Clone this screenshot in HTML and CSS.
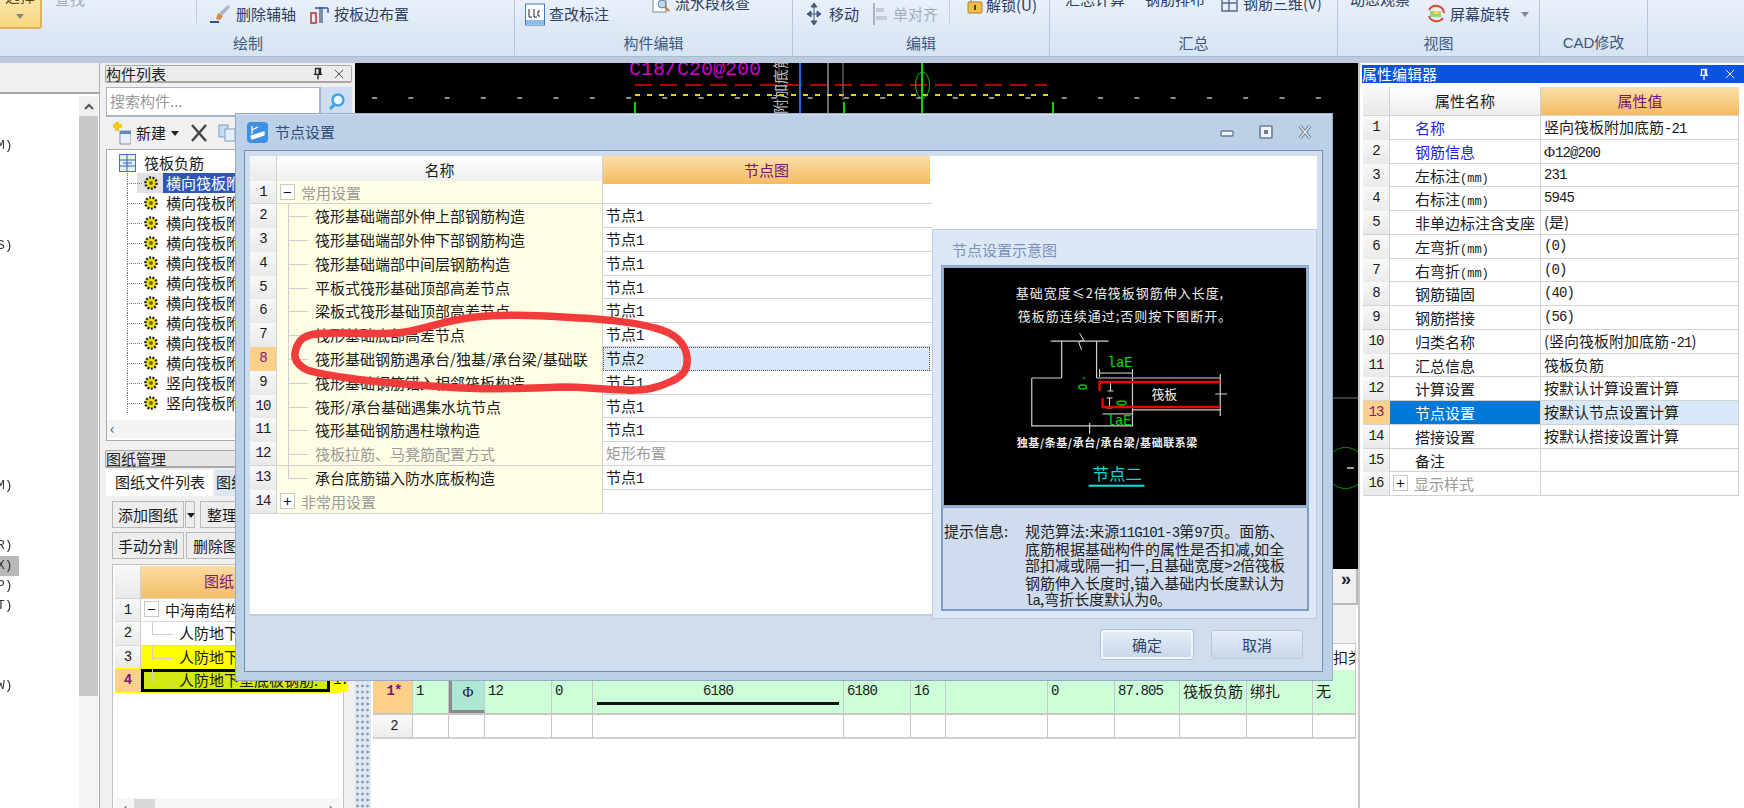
FILE: index.html
```html
<!DOCTYPE html>
<html lang="zh">
<head>
<meta charset="utf-8">
<title>节点设置</title>
<link rel="stylesheet" href="styles.css">
</head>
<body>
<svg class="defs" width="0" height="0" aria-hidden="true">
  <symbol id="gear" viewBox="0 0 16 16"><circle cx="8" cy="8" r="5.6" fill="#eee000" stroke="#222" stroke-width="2.4" stroke-dasharray="2 1.4"/><circle cx="8" cy="8" r="2" fill="#6b6200"/></symbol>
  <symbol id="pin" viewBox="0 0 12 14"><path d="M3 1h6v7H3zM1 8h10M6 8v6M7.5 1v7" fill="none" stroke="currentColor" stroke-width="1.6"/></symbol>
  <symbol id="cross" viewBox="0 0 12 12"><path d="M1 1l10 10M11 1L1 11" fill="none" stroke="currentColor" stroke-width="1.2"/></symbol>
</svg>
<div class="app">
  <header class="ribbon">
    <section class="sec s1">
      <div class="sec-body">
        <div class="bigbtn"><span class="bigbtn-t">选择</span><span class="caret"></span></div>
        <span class="rt dim ym ml13">查找</span>
        <span class="vsep sep1"></span>
        <span class="ri ml11">
          <svg width="24" height="20" viewBox="0 0 24 20"><path d="M2 18h9" stroke="#35507a" stroke-width="2"/><path d="M8 15l2-6 5 3-3 4z" fill="#d9893a"/><path d="M11 9l9-8 2 2-8 9z" fill="#a8b6c8"/></svg>
          <span class="rt">删除辅轴</span></span>
        <span class="ri ml14">
          <svg width="20" height="20" viewBox="0 0 20 20"><rect x="1" y="9" width="5" height="10" fill="none" stroke="#c33" stroke-width="1.6"/><path d="M11 3v16" stroke="#7d8ea5" stroke-width="4"/><path d="M5 4h13M18 4v5" stroke="#3a4fa0" stroke-width="1.4" fill="none"/></svg>
          <span class="rt">按板边布置</span></span>
      </div>
      <div class="sec-label lab1">绘制</div>
    </section>
    <section class="sec s2">
      <div class="sec-body">
        <span class="ri ml10">
          <svg width="20" height="23" viewBox="0 0 20 23"><rect x=".5" y="1" width="19" height="21" fill="#fff" stroke="#3c7cc4"/><rect x="1" y="17" width="18" height="4" fill="#8fbbe8"/><path d="M4 6v8M4 14h3M9 6v8h3M15 8h-2v5h2" stroke="#223" fill="none"/></svg>
          <span class="rt">查改标注</span></span>
        <span class="ri y3 ml43">
          <svg width="19" height="20" viewBox="0 0 19 20"><rect x="1" y="1" width="13" height="18" fill="#fff" stroke="#7488a4"/><circle cx="10" cy="11" r="4" fill="#bcd8f0" stroke="#66809e"/><path d="M13 14l4 4" stroke="#c77a2c" stroke-width="2"/></svg>
          <span class="rt">流水段核查</span></span>
      </div>
      <div class="sec-label">构件编辑</div>
    </section>
    <section class="sec s3">
      <div class="sec-body">
        <span class="ri ml13 gap7">
          <svg width="16" height="24" viewBox="0 0 16 24"><path d="M8 1v22M1 12h14M8 1L5 5h6zM8 23l-3-4h6zM1 12l4-3v6zM15 12l-4-3v6z" fill="#44597a" stroke="#44597a"/></svg>
          <span class="rt">移动</span></span>
        <span class="ri ml13 gap6">
          <svg width="15" height="26" viewBox="0 0 15 26"><path d="M2 2v22" stroke="#aab3bf" stroke-width="2"/><rect x="4" y="7" width="8" height="4" fill="#c4ccd6"/><rect x="4" y="15" width="11" height="4" fill="#c4ccd6"/></svg>
          <span class="rt dim">单对齐</span></span>
        <span class="vsep sep3"></span>
        <span class="ri y5 ml17 gap3">
          <svg width="16" height="18" viewBox="0 0 16 18"><path d="M4 7V3a3 3 0 0 1 6 0" fill="none" stroke="#999" stroke-width="1.6"/><rect x="1" y="6" width="14" height="11" rx="1" fill="#efbe4a" stroke="#a9812a"/><path d="M8 9v5" stroke="#5b3c00" stroke-width="2"/></svg>
          <span class="rt">解锁(U)</span></span>
      </div>
      <div class="sec-label">编辑</div>
    </section>
    <section class="sec s4">
      <div class="sec-body">
        <span class="rt ym ml15">汇总计算</span>
        <span class="rt ym ml20">钢筋排布</span>
        <span class="ri y3 ml15">
          <svg width="19" height="20" viewBox="0 0 19 20"><path d="M2 2h15v16H2zM2 10h15M9 2v16" fill="none" stroke="#52688a" stroke-width="1.4"/></svg>
          <span class="rt">钢筋三维(V)</span></span>
      </div>
      <div class="sec-label">汇总</div>
    </section>
    <section class="sec s5">
      <div class="sec-body">
        <span class="rt ym ml12">动态观察</span>
        <span class="ri ml16">
          <svg width="20" height="20" viewBox="0 0 20 20"><path d="M3 6a8 8 0 0 1 15 3M17 14A8 8 0 0 1 3 12" fill="none" stroke="#d8482c" stroke-width="2"/><rect x="4" y="7" width="11" height="6" fill="#9fd07a"/><rect x="8" y="7" width="5" height="3" fill="#f4d654"/></svg>
          <span class="rt">屏幕旋转</span></span>
        <span class="caret caret-r"></span>
      </div>
      <div class="sec-label">视图</div>
    </section>
    <section class="sec s6"><div class="sec-body"></div><div class="sec-label lat">CAD修改</div></section>
    <section class="sec s7"></section>
  </header>

  <main class="main">
    <aside class="col1">
      <div class="col1-inner">
        <div class="col1-top"></div>
        <div class="col1-body">
          <div class="menu">
            <div class="lrow"></div><div class="lrow"></div><div class="lrow">M)</div><div class="lrow"></div><div class="lrow"></div><div class="lrow"></div><div class="lrow"></div><div class="lrow">S)</div><div class="lrow"></div><div class="lrow"></div><div class="lrow"></div><div class="lrow"></div><div class="lrow"></div><div class="lrow"></div><div class="lrow"></div><div class="lrow"></div><div class="lrow"></div><div class="lrow"></div><div class="lrow"></div><div class="lrow">M)</div><div class="lrow"></div><div class="lrow"></div><div class="lrow">R)</div><div class="lrow on">X)</div><div class="lrow">P)</div><div class="lrow">T)</div><div class="lrow"></div><div class="lrow"></div><div class="lrow"></div><div class="lrow">W)</div>
          </div>
          <div class="vscroll"><div class="vs-up"><svg width="10" height="7" viewBox="0 0 10 7"><path d="M1 6l4-4 4 4" fill="none" stroke="#555" stroke-width="2"/></svg></div><div class="vs-thumb"></div></div>
        </div>
      </div>
    </aside>

    <aside class="col2">
      <div class="ptitle"><span class="ptitle-t">构件列表</span><svg class="pin" width="10" height="13"><use href="#pin"/></svg><svg class="x" width="10" height="10"><use href="#cross"/></svg></div>
      <div class="search"><div class="search-in">搜索构件...</div><div class="search-btn"><svg width="18" height="20" viewBox="0 0 18 20"><circle cx="10" cy="8" r="5.5" fill="#e9f6ff" stroke="#3fa2e6" stroke-width="2.4"/><path d="M6 13l-4 4" stroke="#3fa2e6" stroke-width="3"/></svg></div></div>
      <div class="tools">
        <svg width="20" height="24" viewBox="0 0 20 24"><path d="M6 1v9M2 5h9" stroke="#f2c91d" stroke-width="4"/><rect x="9" y="10" width="11" height="13" fill="#e8eef6" stroke="#7f93ad"/><rect x="9" y="10" width="11" height="3" fill="#5f86bd"/></svg>
        <span class="tool-t">新建</span><span class="caret dark"></span>
        <svg class="tool-x" width="16" height="18" viewBox="0 0 16 18"><path d="M1 1l14 16M15 1L1 17" stroke="#444" stroke-width="2.4"/></svg>
        <svg class="tool-c" width="18" height="18" viewBox="0 0 18 18"><rect x="1" y="1" width="9" height="12" fill="#c8dcf2" stroke="#7d9cc4"/><rect x="7" y="5" width="10" height="12" fill="#e7f0fa" stroke="#7d9cc4"/></svg>
      </div>
      <div class="treebox">
        <div class="troot"><svg width="17" height="18" viewBox="0 0 17 18"><rect x=".5" y=".5" width="16" height="17" fill="#e6f0fb" stroke="#3f78c0"/><path d="M1 6h15M1 12h15M8 1v16M4 9h9" stroke="#2c64b0"/></svg><span>筏板负筋</span></div>
        <div class="titem sel"><svg width="16" height="16"><use href="#gear"/></svg><span>横向筏板附加底筋-1</span></div>
        <div class="titem"><svg width="16" height="16"><use href="#gear"/></svg><span>横向筏板附加底筋-2</span></div>
        <div class="titem"><svg width="16" height="16"><use href="#gear"/></svg><span>横向筏板附加底筋-3</span></div>
        <div class="titem"><svg width="16" height="16"><use href="#gear"/></svg><span>横向筏板附加底筋-4</span></div>
        <div class="titem"><svg width="16" height="16"><use href="#gear"/></svg><span>横向筏板附加底筋-5</span></div>
        <div class="titem"><svg width="16" height="16"><use href="#gear"/></svg><span>横向筏板附加底筋-6</span></div>
        <div class="titem"><svg width="16" height="16"><use href="#gear"/></svg><span>横向筏板附加底筋-7</span></div>
        <div class="titem"><svg width="16" height="16"><use href="#gear"/></svg><span>横向筏板附加底筋-8</span></div>
        <div class="titem"><svg width="16" height="16"><use href="#gear"/></svg><span>横向筏板附加底筋-9</span></div>
        <div class="titem"><svg width="16" height="16"><use href="#gear"/></svg><span>横向筏板附加底筋-10</span></div>
        <div class="titem"><svg width="16" height="16"><use href="#gear"/></svg><span>竖向筏板附加底筋-1</span></div>
        <div class="titem"><svg width="16" height="16"><use href="#gear"/></svg><span>竖向筏板附加底筋-2</span></div>
        <div class="tscroll"><span>‹</span></div>
      </div>
      <div class="ptitle ptitle2"><span class="ptitle-t">图纸管理</span></div>
      <div class="tabs"><div class="tab on">图纸文件列表</div><div class="tab">图纸楼层构件</div></div>
      <div class="btnrow"><div class="pbtn w72">添加图纸</div><div class="pbtn w10"><span class="caret dark"></span></div><div class="pbtn ml4">整理图纸</div></div>
      <div class="btnrow r2"><div class="pbtn w72">手动分割</div><div class="pbtn">删除图纸</div></div>
      <div class="dwg">
        <div class="dwg-h"><div class="dn"></div><div class="dh">图纸名称</div></div>
        <div class="dr"><div class="dn n">1</div><div class="dc"><span class="pm">−</span>中海南结构图纸</div></div>
        <div class="dr"><div class="dn n">2</div><div class="dc ch">人防地下室底板钢筋</div></div>
        <div class="dr yel"><div class="dn n">3</div><div class="dc ch">人防地下室顶板钢筋</div></div>
        <div class="dr yel act"><div class="dn n cur">4</div><div class="dc ch cur"><span>人防地下室底板钢筋.</span></div><div class="dx n">1.</div></div>
        <div class="dscroll"><span>‹</span><i></i><span class="rgt">›</span></div>
      </div>
    </aside>

    <div class="col3">
      <svg class="cad" width="1003" height="506" viewBox="355 63 1003 506">
        <text x="629" y="75" class="cad-m">C18/C20@200</text>
        <path d="M635 85H1047" stroke="#b30000" stroke-width="2" stroke-dasharray="17 8"/>
        <path d="M635 95H1052" stroke="#d8d800" stroke-width="2" stroke-dasharray="5 7"/>
        <path d="M372 98H1330" stroke="#8c8c8c" stroke-width="2" stroke-dasharray="5 31.3"/>
        <path d="M635 102V569M844 102V569M1053 102V569M922 63V569" stroke="#00d800" stroke-width="2"/>
        <ellipse cx="922.5" cy="85" rx="7" ry="13" fill="none" stroke="#00c000"/>
        <path d="M800 63V569" stroke="#1c6ed8" stroke-width="2"/>
        <path d="M828 63V569" stroke="#ddd"/><path d="M843 63V100" stroke="#888"/>
        <path d="M779 63V84" stroke="#777"/>
        <text transform="translate(786 114) rotate(-90)" class="cad-w">附加底筋</text>
        <path d="M1333 398H1358" stroke="#777"/>
        <path d="M1347 468H1354" stroke="#999" stroke-width="2"/>
        <path d="M1358 452a18 16 0 0 0-25 0M1333 484a18 16 0 0 0 25 0" fill="none" stroke="#009000"/>
      </svg>
      <div class="bottom">
        <div class="more"><span>»</span></div>
        <div class="band"></div>
        <div class="gridwrap">
          <div class="grip"></div>
          <div class="bgrid">
            <div class="brow bhead"><div></div><div></div><div></div><div></div><div></div><div></div><div></div><div></div><div></div><div></div><div></div><div></div><div></div><div class="hl">扣类</div></div>
            <div class="brow green">
              <div class="bnum n">1*</div><div class="n">1</div><div class="bsel"><span class="lat-serif">Φ</span></div><div class="n">12</div><div class="n">0</div><div class="bfig n"><span>6180</span><i></i></div><div class="n">6180</div><div class="n">16</div><div></div><div class="n">0</div><div class="n">87.805</div><div>筏板负筋</div><div>绑扎</div><div>无</div>
            </div>
            <div class="brow plain"><div class="bnum2 n">2</div><div></div><div></div><div></div><div></div><div></div><div></div><div></div><div></div><div></div><div></div><div></div><div></div><div></div></div>
          </div>
        </div>
      </div>
    </div>

    <aside class="col4">
      <div class="ptitle blue"><span class="ptitle-t">属性编辑器</span><svg class="pin" width="10" height="13"><use href="#pin"/></svg><svg class="x" width="10" height="10"><use href="#cross"/></svg></div>
      <div class="props">
        <div class="prow phead"><div class="cn"></div><div class="cname">属性名称</div><div class="cval">属性值</div></div>
        <div class="prow"><div class="cn n">1</div><div class="pn bl">名称</div><div class="pv">竖向筏板附加底筋<span class="n">-21</span></div></div>
        <div class="prow"><div class="cn n">2</div><div class="pn bl">钢筋信息</div><div class="pv"><span class="lat-serif">Φ</span><span class="n">12@200</span></div></div>
        <div class="prow"><div class="cn n">3</div><div class="pn">左标注<span class="mm">(mm)</span></div><div class="pv n">231</div></div>
        <div class="prow"><div class="cn n">4</div><div class="pn">右标注<span class="mm">(mm)</span></div><div class="pv n">5945</div></div>
        <div class="prow"><div class="cn n">5</div><div class="pn">非单边标注含支座</div><div class="pv">(是)</div></div>
        <div class="prow"><div class="cn n">6</div><div class="pn">左弯折<span class="mm">(mm)</span></div><div class="pv n">(0)</div></div>
        <div class="prow"><div class="cn n">7</div><div class="pn">右弯折<span class="mm">(mm)</span></div><div class="pv n">(0)</div></div>
        <div class="prow"><div class="cn n">8</div><div class="pn">钢筋锚固</div><div class="pv n">(40)</div></div>
        <div class="prow"><div class="cn n">9</div><div class="pn">钢筋搭接</div><div class="pv n">(56)</div></div>
        <div class="prow"><div class="cn n">10</div><div class="pn">归类名称</div><div class="pv">(竖向筏板附加底筋<span class="n">-21</span>)</div></div>
        <div class="prow"><div class="cn n">11</div><div class="pn">汇总信息</div><div class="pv">筏板负筋</div></div>
        <div class="prow"><div class="cn n">12</div><div class="pn">计算设置</div><div class="pv">按默认计算设置计算</div></div>
        <div class="prow sel"><div class="cn n">13</div><div class="pn">节点设置</div><div class="pv">按默认节点设置计算</div></div>
        <div class="prow"><div class="cn n">14</div><div class="pn">搭接设置</div><div class="pv">按默认搭接设置计算</div></div>
        <div class="prow"><div class="cn n">15</div><div class="pn">备注</div><div class="pv"></div></div>
        <div class="prow"><div class="cn n">16</div><div class="pn gr"><span class="pm pm-p">+</span>显示样式</div><div class="pv"></div></div>
      </div>
    </aside>
  </main>

  <div class="dialog">
    <div class="d-title">
      <svg width="21" height="21" viewBox="0 0 21 21"><rect width="21" height="21" rx="4" fill="#3f8fe0"/><path d="M5 4v8M5 8l6-3M4 14l13-4v3L5 17z" stroke="#fff" fill="#fff" stroke-width="1.3"/></svg>
      <span class="d-title-t">节点设置</span>
      <span class="d-ctrls">
        <svg width="16" height="12" viewBox="0 0 16 12"><rect x="2" y="5" width="12" height="5" rx="1" fill="#eef3f9" stroke="#6c7b8f" stroke-width="1.4"/></svg>
        <svg width="16" height="16" viewBox="0 0 16 16"><rect x="2" y="2" width="12" height="12" rx="1" fill="#eef3f9" stroke="#6c7b8f" stroke-width="1.6"/><rect x="6" y="6" width="4" height="4" fill="#6c7b8f"/></svg>
        <svg width="16" height="16" viewBox="0 0 16 16"><path d="M3 2l10 12M13 2L3 14" stroke="#6c7b8f" stroke-width="3.4"/><path d="M3 2l10 12M13 2L3 14" stroke="#eef3f9" stroke-width="1.2"/></svg>
      </span>
    </div>
    <div class="d-frame">
      <div class="d-main">
        <div class="d-table">
          <div class="trow thead"><div class="cn"></div><div class="cname">名称</div><div class="cval">节点图</div></div>
          <div class="trow"><div class="cn n">1</div><div class="tn gr"><span class="pm">−</span>常用设置</div><div class="tv"></div></div>
          <div class="trow"><div class="cn n">2</div><div class="tn lf">筏形基础端部外伸上部钢筋构造</div><div class="tv">节点<span class="n">1</span></div></div>
          <div class="trow"><div class="cn n">3</div><div class="tn lf">筏形基础端部外伸下部钢筋构造</div><div class="tv">节点<span class="n">1</span></div></div>
          <div class="trow"><div class="cn n">4</div><div class="tn lf">筏形基础端部中间层钢筋构造</div><div class="tv">节点<span class="n">1</span></div></div>
          <div class="trow"><div class="cn n">5</div><div class="tn lf">平板式筏形基础顶部高差节点</div><div class="tv">节点<span class="n">1</span></div></div>
          <div class="trow"><div class="cn n">6</div><div class="tn lf">梁板式筏形基础顶部高差节点</div><div class="tv">节点<span class="n">1</span></div></div>
          <div class="trow"><div class="cn n">7</div><div class="tn lf">筏形基础底部高差节点</div><div class="tv">节点<span class="n">1</span></div></div>
          <div class="trow cur"><div class="cn n">8</div><div class="tn lf">筏形基础钢筋遇承台/独基/承台梁/基础联</div><div class="tv">节点<span class="n">2</span></div></div>
          <div class="trow"><div class="cn n">9</div><div class="tn lf">筏形基础钢筋锚入相邻筏板构造</div><div class="tv">节点<span class="n">1</span></div></div>
          <div class="trow"><div class="cn n">10</div><div class="tn lf">筏形/承台基础遇集水坑节点</div><div class="tv">节点<span class="n">1</span></div></div>
          <div class="trow"><div class="cn n">11</div><div class="tn lf">筏形基础钢筋遇柱墩构造</div><div class="tv">节点<span class="n">1</span></div></div>
          <div class="trow"><div class="cn n">12</div><div class="tn lf gr">筏板拉筋、马凳筋配置方式</div><div class="tv gr">矩形布置</div></div>
          <div class="trow"><div class="cn n">13</div><div class="tn lf last">承台底筋锚入防水底板构造</div><div class="tv">节点<span class="n">1</span></div></div>
          <div class="trow"><div class="cn n">14</div><div class="tn gr"><span class="pm">+</span>非常用设置</div><div class="tv"></div></div>
        </div>
        <div class="d-side">
          <div class="d-blank"></div>
          <div class="d-node">
            <div class="d-node-t">节点设置示意图</div>
            <div class="d-pic">
              <svg width="363" height="235" viewBox="0 0 363 235">
                <text x="72" y="29" class="ct" textLength="208">基础宽度≤2倍筏板钢筋伸入长度,</text>
                <text x="74" y="52" class="ct" textLength="214">筏板筋连续通过;否则按下图断开。</text>
                <path d="M107 72H165M118 72V109M153 72V109M88 109H118M153 109H277M88 109V157H189V109M189 141H277M277 105V147M146 154V165M272 125H284" fill="none" stroke="#cfcfcf" stroke-width="1.2"/>
                <path d="M136 64l4 7-5 2 3 8" fill="none" stroke="#ddd"/>
                <path d="M156 104H189M156 100v8M189 100v8M159 145H189M167 113V122M164 113h6M164 122h6M166 129V139M163 129h6M163 139h6" fill="none" stroke="#ddd"/>
                <path d="M156 122V113H277M159 129V138H277" fill="none" stroke="#f00000" stroke-width="2.4"/>
                <text x="164" y="98" class="cg">laE</text>
                <text x="163" y="156" class="cg">laE</text>
                <ellipse cx="139" cy="118" rx="4" ry="2" fill="none" stroke="#00d000" stroke-width="1.4"/>
                <ellipse cx="178" cy="134" rx="4.5" ry="2" fill="none" stroke="#00d000" stroke-width="1.4"/>
                <path d="M139 109h3" stroke="#00d000"/>
                <text x="208" y="130" class="ct">筏板</text>
                <text x="73" y="178" class="cs" textLength="181">独基/条基/承台/承台梁/基础联系梁</text>
                <text x="149" y="211" class="cc">节点二</text>
                <path d="M145 217H201" stroke="#00e4e4" stroke-width="2"/>
              </svg>
            </div>
            <div class="d-info">
              <div class="d-info-l">提示信息:</div>
              <div class="d-info-t">规范算法:来源<span class="n">11G101-3</span>第<span class="n">97</span>页。面筋、底筋根据基础构件的属性是否扣减,如全部扣减或隔一扣一,且基础宽度&gt;<span class="n">2</span>倍筏板钢筋伸入长度时,锚入基础内长度默认为<span class="n">la</span>,弯折长度默认为<span class="n">0</span>。</div>
            </div>
          </div>
        </div>
      </div>
      <div class="d-foot"><button class="dbtn def">确定</button><button class="dbtn">取消</button></div>
    </div>
    <svg class="scrawl" width="420" height="100" viewBox="0 0 420 100"><path d="M15 53C17 42 22 36 35 34C70 31 100 36 125 32C150 28 165 20 195 17C225 14 255 15 283 17C320 19 350 21 375 28C395 33 405 42 407 57C408 68 405 75 392 81C378 88 365 91 345 90C320 89 300 87 283 87C250 88 215 90 183 88C150 86 115 84 83 80C60 77 42 75 27 70C19 66 14 60 15 53Z" fill="none" stroke="#f23c3c" stroke-width="7.5" stroke-linejoin="round"/></svg>
  </div>
</div>
</body>
</html>
```
FILE: styles.css
```css
*{box-sizing:border-box}
html,body{margin:0;padding:0;background:#fff}
.defs{position:absolute}
.app{width:1744px;height:808px;position:relative;overflow:hidden;display:grid;grid-template-rows:63px 745px;font:15px/20px "Noto Sans CJK SC","Liberation Sans",sans-serif;color:#1a1a1a;filter:blur(.3px)}
.n{font-family:"Liberation Mono","Noto Sans CJK SC",monospace;font-size:14px;letter-spacing:-.9px}
.mm{font-family:"Liberation Mono",monospace;font-size:12px}
.lat-serif{font-family:"Liberation Serif",serif;font-size:15px}

/* ribbon */
.ribbon{display:flex;background:linear-gradient(#e8f0fa,#d6e3f2);border-bottom:6px solid #bccbdd;box-shadow:inset 0 -1px 0 #a9bbd1}
.sec{display:flex;flex-direction:column;border-right:1px solid #b5c6da;overflow:hidden;flex:none}
.s1{width:515px}.s2{width:278px}.s3{width:257px}.s4{width:288px}.s5{width:202px}.s6{width:108px}.s7{flex:1;border:0}
.sec-body{height:33px;display:flex;align-items:flex-start;flex:none}
.sec-label{text-align:center;color:#3c587c;height:20px;line-height:20px}
.lab1{width:496px}
.lat{font-family:"Liberation Sans","Noto Sans CJK SC",sans-serif}
.rt{color:#2d4060;white-space:nowrap;line-height:20px;margin-top:4px}
.ri{display:inline-flex;align-items:center;gap:4px;height:28px;flex:none}
.ri .rt{margin-top:0}
.dim{color:#a3adba}
.ri.y3{margin-top:-11px}.ri.y5{margin-top:-9px}
.rt.ym{margin-top:-11px}
.ml2{margin-left:2px}.ml10{margin-left:10px}.ml11{margin-left:11px}.ml12{margin-left:12px}.ml13{margin-left:13px}.ml14{margin-left:14px}.ml15{margin-left:15px}.ml16{margin-left:16px}.ml17{margin-left:17px}.ml20{margin-left:20px}.ml43{margin-left:43px}
.gap7{gap:7px}.gap6{gap:6px}.gap3{gap:3px}
.vsep{width:1px;height:24px;background:#c3d0df;flex:none}
.sep1{margin-left:111px}.sep3{margin-left:11px}
.bigbtn{width:42px;height:29px;background:linear-gradient(#fbe5a6,#f9d680);border:1px solid #e2b45a;border-width:0 2px 2px 0;border-radius:0 0 3px 0;position:relative;flex:none;overflow:hidden;text-align:center;display:flex;flex-direction:column;align-items:center}
.bigbtn-t{color:#5a4620;margin-top:-14px;line-height:20px}
.caret{width:0;height:0;border:4px solid transparent;border-top:5px solid #7c8794;border-bottom:0;display:inline-block;flex:none}
.bigbtn .caret{margin-top:8px}
.caret.dark{border-top-color:#222}
.caret-r{margin:12px 0 0 11px}

/* main columns */
.main{display:grid;grid-template-columns:105px 250px 1003px 386px;height:745px;min-height:0}
.col1{background:#f0f0f0;padding-right:5px;overflow:hidden}
.col1-inner{height:100%;border-right:1px solid #aeaeae;background:#fff;display:flex;flex-direction:column}
.col1-top{height:31px;background:#f0f0f0;border-bottom:2px solid #a6a6a6;flex:none}
.col1-body{display:flex;flex:1;min-height:0;padding-top:2px}
.menu{width:79px;overflow:hidden;flex:none}
.lrow{height:20px;line-height:20px;font-family:"Liberation Mono",monospace;font-size:13px;width:19px;overflow:hidden;text-indent:-3px;color:#333}
.lrow.on{background:#b9b9b9}
.vscroll{width:19px;flex:none;background:#f4f4f4;height:100%}
.vs-up{height:20px;background:#f0f0f0;display:flex;align-items:center;justify-content:center}
.vs-thumb{height:580px;background:#c8c8c8}

.col2{padding:2px 3px 0 0;display:flex;flex-direction:column;overflow:hidden;background:#f0f0f0;min-height:0}
.ptitle{height:18px;display:flex;align-items:center;background:#ececec;border:1px solid #a8a8a8;border-width:1px 1px 2px 1px;border-radius:2px;color:#222;position:relative;flex:none;padding-right:7px;gap:11px;width:247px}
.ptitle-t{margin-right:auto;line-height:16px;white-space:nowrap}
.ptitle .pin{color:#222}.ptitle .x{color:#555}
.ptitle.blue{background:#0a52e0;color:#fff;border:0;width:auto;height:18px;padding-right:9px;gap:16px;border-radius:0}
.ptitle.blue .pin,.ptitle.blue .x{color:#e8f0ff}
.search{display:flex;height:30px;margin:4px 0 0 1px;flex:none;width:246px}
.search-in{flex:1;background:#fff;border:1px solid #aab4c2;border-width:1px 2px 2px 1px;color:#9a9a9a;padding:3px 3px;line-height:20px}
.search-btn{width:31px;background:#cedef0;display:flex;align-items:center;justify-content:center;flex:none}
.tools{height:32px;display:flex;align-items:center;padding-left:6px;flex:none}
.tool-t{margin:0 5px}
.tool-x{margin-left:12px}.tool-c{margin-left:11px}
.treebox{height:292px;background:#fff;border:1px solid #a9a9a9;margin-left:1px;width:247px;padding-top:3px;flex:none;position:relative;overflow:hidden}
.troot{height:20px;display:flex;align-items:center;padding-left:12px;gap:8px;white-space:nowrap}
.titem{height:20px;display:flex;align-items:center;padding-left:36px;white-space:nowrap;gap:7px;position:relative}
.titem::before{content:"";position:absolute;left:20px;top:0;width:14px;height:10px;border-left:1px dotted #777;border-bottom:1px dotted #777}
.titem::after{content:"";position:absolute;left:20px;top:10px;bottom:0;border-left:1px dotted #777}
.titem svg{flex:none}
.titem.sel{background:linear-gradient(90deg,transparent 30px,#e2e2e2 30px,#e2e2e2 60px,transparent 60px)}
.titem.sel span{background:#2f58b4;color:#fff;padding:0 3px;margin-left:-3px;line-height:20px}
.tscroll{position:absolute;left:0;right:0;bottom:2px;height:18px;background:#f3f3f3;padding-left:3px;line-height:16px;color:#555}
.ptitle2{margin-top:9px;background:#e6e6e6}
.tabs{display:flex;height:26px;margin:2px 0 0 1px;align-items:flex-end;flex:none;gap:2px}
.tab{height:26px;padding:2px 9px;background:#dce6f2;white-space:nowrap;width:22px;overflow:hidden;flex:none;padding-left:1px}
.tab.on{background:#fff;width:107px;padding-left:9px}
.btnrow{display:flex;margin:5px 0 0 7px;height:27px;flex:none;white-space:nowrap}
.btnrow.r2{margin-top:4px}
.pbtn{height:27px;padding:0 6px;border:1px solid #b9b9b9;background:#ededed;line-height:25px;flex:none}
.w72{width:72px;text-align:center;padding:0}.w10{width:10px;padding:0 1px;margin:0 4px 0 1px;line-height:20px}.ml4{margin-left:1px}
.btnrow.r2 .w72{margin-right:2px}
.dwg{margin:5px 0 0 7px;width:232px;flex:1;background:#fff;border:1px solid #c0c0c0;border-bottom:0;position:relative;min-height:0;padding:1px 2px}
.dwg-h{display:flex;height:33px;border-bottom:1px solid #d4d4d4}
.dn{width:26px;flex:none;background:linear-gradient(#f8f8f8,#e9e9e9);text-align:center;line-height:23px;border-right:1px solid #d0d0d0}
.dh{flex:1;background:linear-gradient(#fbdca2,#f3bf68);color:#7a1a78;padding-left:63px;line-height:30px}
.dr{display:flex;height:23.4px;border-bottom:1px solid #d8d8d8;position:relative}
.dc{flex:1;line-height:22px;padding-left:3px;white-space:nowrap;overflow:hidden}
.dc.ch{padding-left:38px;position:relative}
.dc.ch::before{content:"";position:absolute;left:11px;top:0;width:20px;height:12px;border-left:1px solid #cfcfcf;border-bottom:1px solid #cfcfcf}
.yel{background:#ffff00;border-bottom-color:#ffff00}
.dn.cur{background:#fdd08a;color:#7a1a78;font-weight:700}
.dc.cur{flex:none;width:189px;background:#d4e814;outline:3px solid #000;outline-offset:-3px;padding-left:38px}
.dx{flex:1;background:#ff0;line-height:22px;padding-left:3px}
.pm{display:inline-block;width:15px;height:16px;border:1px solid #c8c8c8;background:#fff;line-height:14px;text-align:center;color:#111;margin-right:6px;font-size:15px;vertical-align:1px}
.dscroll{position:absolute;left:2px;right:2px;top:233px;height:18px;display:flex;align-items:center;background:#f6f6f6;color:#444;padding:0 8px}
.dscroll i{width:21px;height:16px;background:#d8d8d8;margin-left:6px}
.dscroll .rgt{margin-left:auto}

/* canvas + bottom */
.col3{background:#000;display:flex;flex-direction:column;min-height:0}
.cad{display:block;flex:none;background:#000}
.cad-m{font:20px "Liberation Mono",monospace;fill:#d000d0}
.cad-w{font-size:15px;fill:#bbb}
.bottom{flex:1;background:#fff;display:flex;flex-direction:column;min-height:0}
.more{height:36px;background:#f0f0f0;border:solid #b8b8b8;border-width:0 2px 2px 0;text-align:right;padding:0 5px;font:700 18px/20px "Liberation Sans",sans-serif;color:#222;flex:none}
.band{height:38px;background:#f0f0f0;flex:none;margin-right:2px}
.gridwrap{display:flex;flex:1;min-height:0;margin-top:-38px;padding-top:38px}
.grip{width:16px;flex:none;margin-top:-38px;margin-right:2px;background:#dfe7f2 radial-gradient(#8c9cb0 1px,transparent 1.4px) 0 0/5px 6px}
.bgrid{width:983px;flex:none;background:#fff}
.brow{display:grid;grid-template-columns:40px 36px 36px 67px 41px 251px 67px 35px 102px 67px 65px 67px 66px 43px}
.brow>div{border-right:1px solid #c8c8c8;padding-left:3px;white-space:nowrap;overflow:hidden}
.bhead{height:27px;background:#fff;border-top:1px solid #c8c8c8}
.hl{padding-left:20px!important;line-height:26px}
.green{height:45px;background:#ccffd8;border-bottom:2px solid #c8c8c8}
.green>div{line-height:20px;padding-top:11px}
.bnum{background:#fdd08a;color:#7a1a78;text-align:center;font-weight:700}
.bsel{background:#ade8d6;border-left:3px solid #8a8a8a;border-bottom:3px solid #8a8a8a;text-align:center;padding-left:0!important}
.bfig{text-align:center;padding:13px 4px 0!important;line-height:16px!important}
.bfig i{display:block;height:3px;background:#111;margin-top:3px}
.plain{height:24px;border-bottom:2px solid #d0d0d0}
.plain>div{line-height:22px}
.bnum2{background:linear-gradient(#fafafa,#ececec);text-align:center}

/* right column */
.col4{background:#fff;padding:2px 0 0 2px;border-left:2px solid #c8c8c8;min-height:0}
.props{margin:4px 0 0 1px;width:376px}
.prow{display:grid;grid-template-columns:27px 151px 198px;height:23.75px;border-bottom:1px solid #d2d2d2}
.phead{height:29px}
.cn{background:linear-gradient(#f8f8f8,#e9e9e9);border-right:1px solid #d0d0d0;text-align:center;line-height:22px}
.cname{background:linear-gradient(#fff,#ededed);text-align:center;line-height:28px;border-right:1px solid #d0d0d0}
.cval{background:linear-gradient(#fcdfa8,#f2bc62);text-align:center;color:#6d1670;line-height:28px}
.pn{padding-left:25px;border-right:1px solid #d2d2d2;line-height:23px;white-space:nowrap}
.pv{padding-left:3px;line-height:22px;white-space:nowrap;border-right:1px solid #d2d2d2}
.bl{color:#1e1eec}
.gr{color:#9a9a9a}
.pn.gr{padding-left:3px}
.pm-p{margin-right:6px;color:#111}
.prow.sel .cn{background:#fdd08a;color:#7a1a78}
.prow.sel .pn{background:#0078d7;color:#fff}
.prow.sel .pv{background:#d8e9f9}

/* dialog */
.dialog{position:absolute;left:235px;top:113px;width:1098px;height:568px;background:#bcd0e8;border:1px solid #95abc8;display:flex;flex-direction:column;box-shadow:inset 0 1px 0 #d4e0ef}
.d-title{height:36px;display:flex;align-items:center;padding-left:11px;flex:none}
.d-title-t{margin-left:7px;color:#2f4d75}
.d-ctrls{margin-left:auto;display:flex;gap:23px;margin-right:19px;align-items:center}
.d-frame{margin:0 9px 8px 8px;flex:1;background:#d0dded;border:1px solid #6f90b7;padding:5px 5px 0;display:flex;flex-direction:column;min-height:0}
.d-main{display:flex;height:460px;flex:none}
.d-table{width:682px;background:#fff;flex:none;border:solid #c2cbd8;border-width:0 0 2px 0}
.trow{display:grid;grid-template-columns:27px 326px 327px;height:23.8px;border-bottom:1px solid #d2d2d2}
.thead{height:24.5px}
.tn{background:#fffee4;border-right:1px solid #d2d2d2;padding-left:3px;line-height:23px;white-space:nowrap;overflow:hidden;position:relative}
.tv{line-height:22px;padding-left:3px;white-space:nowrap}
.tn.lf{padding-left:38px}
.tn.lf::before{content:"";position:absolute;left:11px;top:0;width:20px;height:12px;border-bottom:1px solid #cfcfcf}
.tn.lf::after{content:"";position:absolute;left:11px;top:0;bottom:-1px;border-left:1px solid #cfcfcf}
.tn.last::after{bottom:11px}
.trow.cur .cn{background:#fdd08a;color:#7a1a78}
.trow.cur .tv{background:#d8e9f9;outline:1px dotted #555;outline-offset:-1px}
.d-side{flex:1;display:flex;flex-direction:column;min-width:0}
.d-blank{height:73px;background:#fff;flex:none}
.d-node{flex:1;background:#dce8f5;border:1px solid #bccde2;padding:0 7px 7px 8px;display:flex;flex-direction:column}
.d-node-t{height:35px;line-height:40px;color:#7c92b8;padding-left:11px;flex:none}
.d-pic{height:243px;border:3px solid #8aa6cc;background:#000;flex:none;outline:1px solid #9fb6d6;outline-offset:-2px}
.d-pic svg{display:block;width:100%;height:100%}
.ct{font-size:13px;fill:#f0f0f0}
.cg{font:14px "Liberation Mono",monospace;fill:#00d800}
.cs{font-size:11px;font-weight:700;fill:#eee}
.cc{font-size:16.5px;fill:#00dcdc}
.d-info{flex:1;border:2px solid #7b9cc4;border-top:0;background:#cfdced;display:flex;padding:15px 0 0 1px;line-height:15.4px;color:#222;min-height:0}
.d-info-l{width:81px;flex:none;white-space:nowrap}
.d-info-t{width:272px}
.d-foot{flex:1;display:flex;justify-content:flex-end;align-items:center;gap:18px;padding-right:14px;padding-top:1px}
.dbtn{width:92px;height:29px;background:linear-gradient(#e4edf7,#c9d8ea);border:1px solid #b9c9dd;border-radius:3px;color:#2d4468;font:15px "Noto Sans CJK SC",sans-serif;padding:0}
.dbtn.def{border:2px solid #f2f7fc;box-shadow:0 0 0 1px #aebfd6}
.scrawl{position:absolute;left:44px;top:186px;pointer-events:none}
```
